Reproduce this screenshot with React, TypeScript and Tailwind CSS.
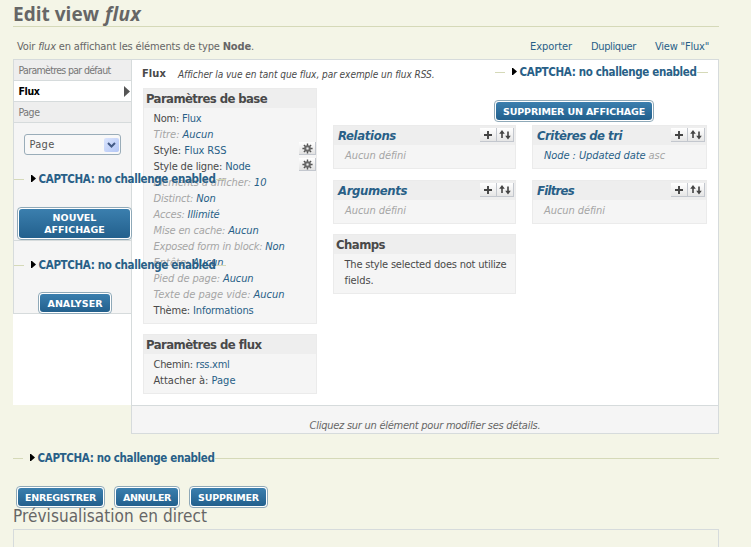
import { useLayoutEffect, useRef, useState } from "react";
import type { ReactNode } from "react";

/** Inline text whose letter spacing is adjusted so that it spans `w` pixels. */
function Fit({ w, className = "", children }: { w: number; className?: string; children: ReactNode }) {
  const ref = useRef<HTMLSpanElement>(null);
  const [spacing, setSpacing] = useState(0);
  useLayoutEffect(() => {
    const el = ref.current;
    if (!el) return;
    const count = Math.max(1, (el.textContent ?? "").length);
    setSpacing((w - el.getBoundingClientRect().width) / count);
  }, [w]);
  return (
    <span ref={ref} className={`inline-block whitespace-pre ${className}`} style={{ letterSpacing: `${spacing}px` }}>
      {children}
    </span>
  );
}

function Captcha({ w, className = "" }: { w: number; className?: string }) {
  return (
    <div className={`flex h-4 items-center whitespace-nowrap ${className}`}>
      <span className="h-px w-[10px] shrink-0 bg-[#d5d9b8]" />
      <svg className="mb-px ml-[7px] h-[7px] w-[5px] shrink-0" viewBox="0 0 5 7">
        <path d="M0 0H1L5 3.5L1 7H0Z" fill="#000" />
      </svg>
      <Fit w={w} className="ml-[2.5px] text-[11.5px] leading-4 font-bold text-[#285f87]">
        CAPTCHA: no challenge enabled
      </Fit>
      <span className="h-px min-w-[10px] flex-1 bg-[#d5d9b8]" />
    </div>
  );
}

function Button({ w, className = "", children }: { w: number; className?: string; children: ReactNode }) {
  return (
    <button
      className={`flex h-[22px] shrink-0 items-center justify-center rounded-[4px] border border-[#8fa9b8] bg-white p-px font-['DejaVu_Sans','Verdana',sans-serif] text-[9.5px] leading-3 font-bold text-white [font-stretch:normal] ${className}`}
    >
      <span className="flex h-full w-full items-center justify-center rounded-[3px] bg-linear-to-b from-[#3b7fae] to-[#22608d] pt-px">
        <Fit w={w}>{children}</Fit>
      </span>
    </button>
  );
}

function Gear() {
  return (
    <span className="-mt-px flex h-[13px] w-[17px] items-center justify-center border-r border-b border-[#c3c7ce] bg-linear-to-b from-white to-[#e2e2e2]">
      <svg className="h-[11px] w-[11px]" viewBox="0 0 11 11">
        <g stroke="#555" strokeWidth="1.4">
          <path d="M5.5 0.4V10.6M0.4 5.5H10.6M1.9 1.9L9.1 9.1M9.1 1.9L1.9 9.1" />
        </g>
        <circle cx="5.5" cy="5.5" r="3.3" fill="#666" />
        <circle cx="5.5" cy="5.5" r="1.2" fill="#eee" stroke="#aaa" strokeWidth="0.5" />
      </svg>
    </span>
  );
}

function HeaderTools() {
  return (
    <span className="mt-[2px] mr-px flex h-[14px]">
      <span className="flex w-[17px] items-center justify-center border-r border-b border-[#c3c7ce] bg-linear-to-b from-white to-[#e6e6e6]">
        <svg className="h-2 w-2" viewBox="0 0 8 8">
          <path d="M4 0V8M0 4H8" stroke="#444" strokeWidth="1.9" />
        </svg>
      </span>
      <span className="flex w-[17px] items-center justify-center border-r border-b border-[#c3c7ce] bg-linear-to-b from-white to-[#e6e6e6]">
        <svg className="h-[10px] w-3" viewBox="0 0 12 10">
          <path d="M3 8V2M9 1.5V8" stroke="#444" strokeWidth="1.6" />
          <path d="M0.2 3.8L3 0L5.8 3.8ZM6.2 5.7L9 9.5L11.8 5.7Z" fill="#444" />
        </svg>
      </span>
    </span>
  );
}

function Box({
  title,
  w,
  link,
  className = "",
  children,
}: {
  title: string;
  w: number;
  link?: boolean;
  className?: string;
  children: ReactNode;
}) {
  return (
    <section className={`border border-[#ebebeb] bg-[#f5f5f5] ${className}`}>
      <h3 className="flex h-[19px] justify-between bg-[#eee] text-[13px] leading-[19px] font-bold">
        <Fit w={w} className={link ? "ml-[4px] text-[#285f87] italic" : "ml-[2px] text-[#494949]"}>
          {title}
        </Fit>
        {link && <HeaderTools />}
      </h3>
      <div className="pt-[3px] pl-[9.5px]">{children}</div>
    </section>
  );
}

function Row({
  label,
  value,
  w,
  muted,
  gear,
}: {
  label: string;
  value: string;
  w: number;
  muted?: boolean;
  gear?: boolean;
}) {
  return (
    <div className="flex h-4 justify-between leading-4">
      <Fit w={w} className={muted ? "text-[#a5a5a5] italic" : "text-[#494949]"}>
        {label}: <span className="text-[#285f87]">{value}</span>
      </Fit>
      {gear && <Gear />}
    </div>
  );
}

const basics = [
  { label: "Nom", value: "Flux", w: 48 },
  { label: "Titre", value: "Aucun", w: 60, muted: true },
  { label: "Style", value: "Flux RSS", w: 73, gear: true },
  { label: "Style de ligne", value: "Node", w: 97, gear: true },
  { label: "Éléments à afficher", value: "10", w: 113, muted: true },
  { label: "Distinct", value: "Non", w: 62, muted: true },
  { label: "Acces", value: "Illimité", w: 66, muted: true },
  { label: "Mise en cache", value: "Aucun", w: 105, muted: true },
  { label: "Exposed form in block", value: "Non", w: 131, muted: true },
  { label: "Entête", value: "Aucun", w: 70, muted: true },
  { label: "Pied de page", value: "Aucun", w: 100, muted: true },
  { label: "Texte de page vide", value: "Aucun", w: 131, muted: true },
  { label: "Thème", value: "Informations", w: 100 },
];

function Undefined() {
  return (
    <Fit w={61} className="ml-[1.5px] leading-4 text-[#a5a5a5] italic">
      Aucun défini
    </Fit>
  );
}

function Sidebar() {
  return (
    <aside className="z-10 h-[346px] w-[118px] shrink-0 border-t border-[#d6dbdc] bg-white text-[10.5px]">
      <div className="h-[254px] border-b border-l border-[#d6dbdc] bg-[#f5f5f5]">
        <div className="flex h-[21px] items-center border-b border-[#d6dbdc] bg-[#eee] pt-[2px] pl-[4.5px] text-[#777]">
          <Fit w={92}>Paramètres par défaut</Fit>
        </div>
        <div className="flex h-[21px] items-center justify-between border-b border-[#d6dbdc] bg-white pr-px pl-[4.5px] font-bold text-black">
          <Fit w={21} className="pt-px">
            Flux
          </Fit>
          <svg className="h-[11px] w-[6px]" viewBox="0 0 6 11">
            <path d="M0 0L6 5.5L0 11Z" fill="#555" />
          </svg>
        </div>
        <div className="flex h-[21px] items-center border-b border-[#d6dbdc] bg-[#eee] pt-[2px] pl-[4.5px] text-[#777]">
          <Fit w={21}>Page</Fit>
        </div>
        <div className="mt-[11px] ml-[10px] flex h-[21px] w-[97px] items-center justify-between rounded-[3px] border border-[#9aadb9] bg-[#f8f8f8] pr-px pl-[4.5px] text-[11px] text-[#555]">
          <Fit w={25} className="pt-px">
            Page
          </Fit>
          <span className="flex h-[14px] w-[15px] items-center justify-center rounded-[2px] bg-linear-to-br from-[#dbe5fd] to-[#b3c6f5]">
            <svg className="h-[6px] w-[9px]" viewBox="0 0 9 6">
              <path d="M1 1L4.5 4.5L8 1" fill="none" stroke="#435a85" strokeWidth="2" />
            </svg>
          </span>
        </div>
        <Captcha w={177} className="mt-[16px] w-[212px]" />
        <div className="h-[54px] border-b border-[#d6dbdc] pt-[20px] pl-[3px]">
          <Button w={61} className="h-[33px] w-[115px] text-center">
            <span className="block">NOUVEL{"\n"}AFFICHAGE</span>
          </Button>
        </div>
        <Captcha w={177} className="mt-[16px] w-[212px]" />
        <Button w={55} className="mt-[19px] ml-[24px] w-[74px]">
          ANALYSER
        </Button>
      </div>
    </aside>
  );
}

export default function App() {
  return (
    <main className="h-[547px] w-[751px] overflow-hidden bg-[#f4f5e7] pl-[13px] font-['DejaVu_Sans_Condensed','DejaVu_Sans',sans-serif] text-[11px] text-[#494949] [font-stretch:condensed]">
      <div className="w-[706px]">
        <h1 className="h-[27px] border-b border-[#d5d9b8] font-['Open_Sans',sans-serif] text-[19px] leading-[28px] font-bold text-[#666] [font-stretch:normal]">
          <Fit w={86}>Edit view</Fit>
          <Fit w={36} className="ml-[6px] italic">
            flux
          </Fit>
        </h1>
        <div className="flex h-[32px] items-center justify-between pt-[8px] pr-[10px] pl-[4px] text-[#666]">
          <Fit w={237}>
            Voir <em>flux</em> en affichant les éléments de type <b>Node</b>.
          </Fit>
          <nav className="flex gap-[19px] text-[#285f87]">
            <Fit w={42}>Exporter</Fit>
            <Fit w={45}>Dupliquer</Fit>
            <Fit w={54}>View "Flux"</Fit>
          </nav>
        </div>

        <div className="flex h-[375px]">
          <Sidebar />
          <div className="flex w-[588px] flex-col border border-[#d6dbdc] bg-white">
            <div className="flex h-[345px] pl-[11px]">
              <div className="w-[174px] shrink-0">
                <div className="flex h-[28px] items-center whitespace-nowrap">
                  <Fit w={24} className="-ml-px pt-px font-bold">
                    Flux
                  </Fit>
                  <Fit w={257} className="ml-[12px] pt-px text-[10px] italic">
                    Afficher la vue en tant que flux, par exemple un flux RSS.
                  </Fit>
                </div>
                <Box title="Paramètres de base" w={121} className="h-[236px]">
                  {basics.map((row) => (
                    <Row key={row.label} {...row} />
                  ))}
                </Box>
                <Box title="Paramètres de flux" w={115} className="mt-[10px] h-[60px]">
                  <Row label="Chemin" value="rss.xml" w={76} />
                  <Row label="Attacher à" value="Page" w={82} />
                </Box>
              </div>

              <div className="mt-[65px] ml-[16px] flex w-[183px] shrink-0 flex-col gap-[11px]">
                <Box title="Relations" w={58} link className="h-[44px]">
                  <Undefined />
                </Box>
                <Box title="Arguments" w={69} link className="h-[44px]">
                  <Undefined />
                </Box>
                <Box title="Champs" w={49} className="-mt-px h-[60px]">
                  <div className="ml-px leading-4">
                    <Fit w={162}>The style selected does not utilize</Fit>
                    <br />
                    <Fit w={29}>fields.</Fit>
                  </div>
                </Box>
              </div>

              <div className="-ml-[21px] flex w-[213px] flex-col pt-[4px]">
                <Captcha w={177} />
                <Button w={142} className="mt-[20px] -ml-px w-[160px]">
                  SUPPRIMER UN AFFICHAGE
                </Button>
                <div className="mt-[3px] ml-[37px] flex w-[175px] flex-col gap-[11px]">
                  <Box title="Critères de tri" w={85} link className="h-[44px]">
                    <Fit w={121} className="ml-[1.5px] leading-4 text-[#285f87] italic">
                      Node : Updated date <span className="text-[#a5a5a5]">asc</span>
                    </Fit>
                  </Box>
                  <Box title="Filtres" w={37} link className="h-[44px]">
                    <Undefined />
                  </Box>
                </div>
              </div>
            </div>
            <footer className="flex flex-1 items-end justify-center border-t border-[#d6dbdc] bg-[#f5f5f5] leading-[14px] text-[#666] italic">
              <Fit w={231}>Cliquez sur un élément pour modifier ses détails.</Fit>
            </footer>
          </div>
        </div>

        <Captcha w={177} className="mt-[16px]" />
        <div className="mt-[20px] flex gap-[9px] pl-[3px]">
          <Button w={71} className="w-[89px]">
            ENREGISTRER
          </Button>
          <Button w={48} className="w-[66px]">
            ANNULER
          </Button>
          <Button w={61} className="w-[79px]">
            SUPPRIMER
          </Button>
        </div>
        <h2 className="-mt-[2px] h-[23px] text-[17px] leading-5 text-[#666]">
          <Fit w={194}>Prévisualisation en direct</Fit>
        </h2>
        <div className="h-10 border border-[#d6dbdc]" />
      </div>
    </main>
  );
}
